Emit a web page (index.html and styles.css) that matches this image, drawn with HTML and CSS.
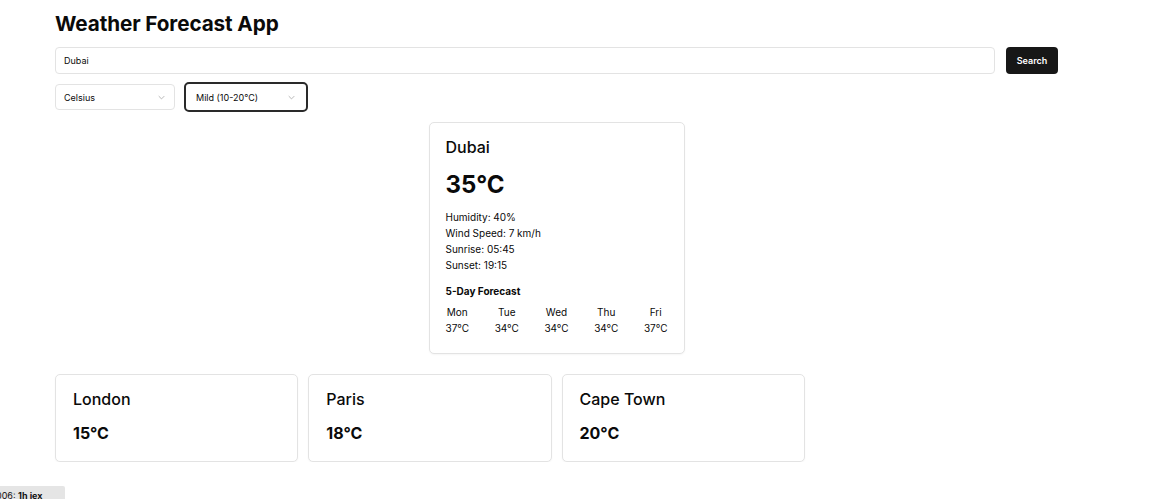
FILE: index.html
```html
<!DOCTYPE html>
<html>
<head>
<meta charset="utf-8">
<link rel="stylesheet" href="styles.css">
</head>
<body>
<div class="app">
  <h1 class="title">Weather Forecast App</h1>
  <div class="search-row">
    <div class="input">Dubai</div>
    <button class="btn">Search</button>
  </div>
  <div class="filters">
    <div class="select sel-unit"><span>Celsius</span><svg class="chev" viewBox="0 0 10 6"><path d="M1 1l4 4 4-4" fill="none" stroke="#9a9a9a" stroke-width="1"/></svg></div>
    <div class="select sel-range focus"><span>Mild (10-20°C)</span><svg class="chev" viewBox="0 0 10 6"><path d="M1 1l4 4 4-4" fill="none" stroke="#9a9a9a" stroke-width="1"/></svg></div>
  </div>
  <div class="main-wrap">
    <div class="card main-card">
      <div class="city">Dubai</div>
      <div class="big-temp">35°C</div>
      <div class="details">
        <div>Humidity: 40%</div>
        <div>Wind Speed: 7 km/h</div>
        <div>Sunrise: 05:45</div>
        <div>Sunset: 19:15</div>
      </div>
      <div class="fc-title">5-Day Forecast</div>
      <div class="forecast">
        <div class="day"><div>Mon</div><div>37°C</div></div>
        <div class="day"><div>Tue</div><div>34°C</div></div>
        <div class="day"><div>Wed</div><div>34°C</div></div>
        <div class="day"><div>Thu</div><div>34°C</div></div>
        <div class="day"><div>Fri</div><div>37°C</div></div>
      </div>
    </div>
  </div>
  <div class="cities">
    <div class="card city-card"><div class="city">London</div><div class="small-temp">15°C</div></div>
    <div class="card city-card"><div class="city">Paris</div><div class="small-temp">18°C</div></div>
    <div class="card city-card"><div class="city">Cape Town</div><div class="small-temp">20°C</div></div>
  </div>
</div>
<div class="badge">006: <b>1h jex</b></div>
</body>
</html>
```
FILE: styles.css
```css
* { box-sizing: border-box; }
html, body { margin: 0; padding: 0; background: #fff; }
body { font-family: Inter, "Noto Sans", sans-serif; color: #0a0a0a; }
.app { width: 1003px; margin-left: 55px; padding-top: 11px; }
.title { font-size: 20.7px; font-weight: 700; margin: 0; line-height: 26px; letter-spacing: -0.1px; }
.search-row { display: flex; gap: 11px; margin-top: 10px; }
.input { flex: 1; height: 27px; border: 1px solid #e3e3e3; border-radius: 4px; font-size: 9px; line-height: 25px; padding-left: 8px; }
.btn { width: 52px; height: 27px; background: #171717; color: #fff; border: 0; border-radius: 4px; font-family: inherit; font-size: 9px; font-weight: 600; padding: 0; }
.filters { display: flex; gap: 9px; margin-top: 8px; align-items: center; }
.select { height: 26px; border: 1px solid #e3e3e3; border-radius: 4px; font-size: 9px; display: flex; align-items: center; justify-content: space-between; padding: 0 9px 0 8px; }
.sel-unit { width: 120px; }
.sel-range { width: 124px; height: 30px; border: 2px solid #2a2a2a; border-radius: 5px; padding: 0 11px 0 10px; }
.chev { width: 7px; height: 5px; }
.main-wrap { display: flex; justify-content: center; margin-top: 10px; }
.card { border: 1px solid #e3e3e3; border-radius: 5px; background: #fff; box-shadow: 0 1px 2px rgba(0,0,0,0.04); }
.main-card { width: 256px; padding: 13px 16px 17px 16px; }
.city { font-size: 16px; font-weight: 500; line-height: 22px; }
.big-temp { font-size: 24px; font-weight: 700; line-height: 30px; margin-top: 12px; }
.details { font-size: 10px; line-height: 16px; margin-top: 9px; }
.fc-title { font-size: 10px; font-weight: 700; line-height: 14px; margin-top: 11px; }
.forecast { display: flex; justify-content: space-between; margin-top: 6px; font-size: 10px; line-height: 16px; }
.day { text-align: center; }
.cities { display: grid; grid-template-columns: repeat(4, 1fr); gap: 10px; margin-top: 20px; }
.city-card { height: 88px; padding: 13px 17px; }
.small-temp { font-size: 16px; font-weight: 700; line-height: 22px; margin-top: 12px; }
.badge { position: fixed; left: -8px; top: 486px; width: 73px; height: 20px; background: #e5e5e5; font-size: 9px; line-height: 20px; padding-left: 4px; color: #111; border-radius: 2px; }
```
